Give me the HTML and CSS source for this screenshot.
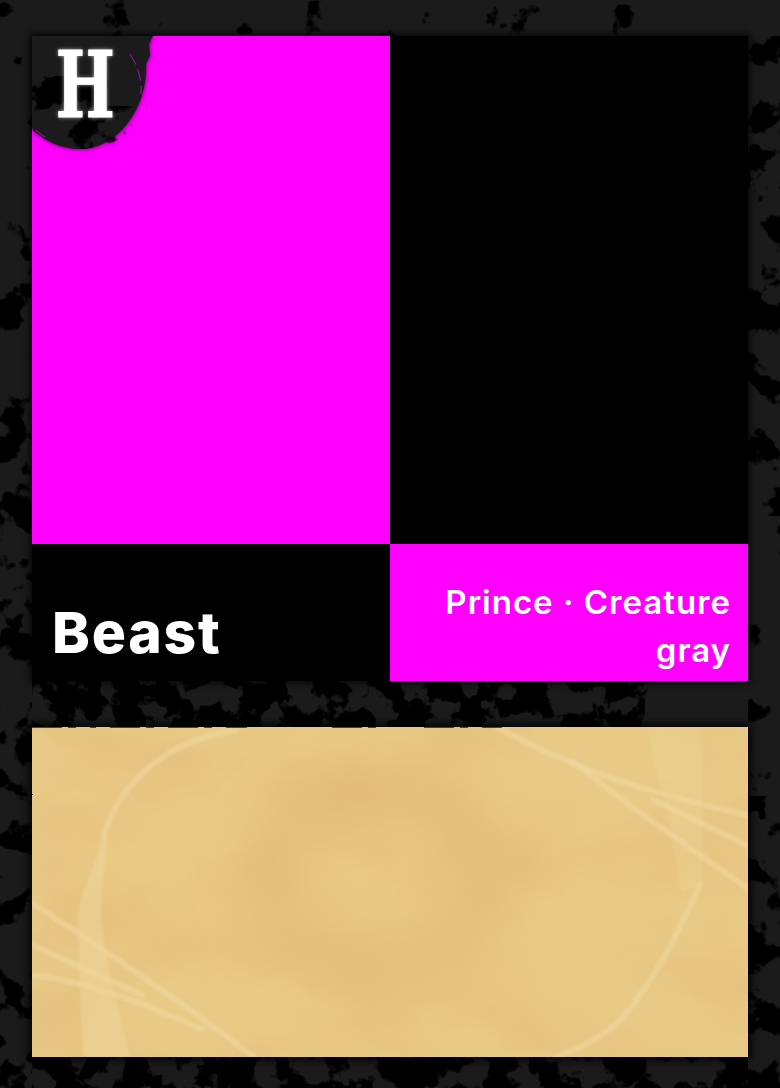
FILE: index.html
```html
<!DOCTYPE html>
<html lang="en">
<head>
    <meta charset="UTF-8">
    <meta name="viewport" content="width=device-width, initial-scale=1.0">
    <title>Beast</title>
    <link rel="stylesheet" href="styles.css">
</head>
<body>
    <div class="sheet">
        <!-- grunge behind the panels -->
        <svg class="grunge" width="780" height="1088" viewBox="0 0 780 1088" xmlns="http://www.w3.org/2000/svg">
            <defs>
                <filter id="ink-sparse" x="0" y="0" width="100%" height="100%" color-interpolation-filters="sRGB">
                    <feTurbulence type="fractalNoise" baseFrequency="0.03" numOctaves="4" seed="4"/>
                    <feColorMatrix values="0 0 0 0 0  0 0 0 0 0  0 0 0 0 0  14 0 0 0 -9.2"/>
                    <feComposite operator="in" in2="SourceAlpha"/>
                </filter>
                <filter id="ink-mid" x="0" y="0" width="100%" height="100%" color-interpolation-filters="sRGB">
                    <feTurbulence type="fractalNoise" baseFrequency="0.03" numOctaves="4" seed="11"/>
                    <feColorMatrix values="0 0 0 0 0  0 0 0 0 0  0 0 0 0 0  14 0 0 0 -7.2"/>
                    <feComposite operator="in" in2="SourceAlpha"/>
                </filter>
                <filter id="ink-dense" x="0" y="0" width="100%" height="100%" color-interpolation-filters="sRGB">
                    <feTurbulence type="fractalNoise" baseFrequency="0.035" numOctaves="4" seed="23"/>
                    <feColorMatrix values="0 0 0 0 0  0 0 0 0 0  0 0 0 0 0  14 0 0 0 -6"/>
                    <feComposite operator="in" in2="SourceAlpha"/>
                </filter>
                <filter id="rough" x="-2%" y="-2%" width="104%" height="104%">
                    <feTurbulence type="fractalNoise" baseFrequency="0.2" numOctaves="2" seed="7"/>
                    <feDisplacementMap in="SourceGraphic" scale="1.5" xChannelSelector="R" yChannelSelector="G"/>
                </filter>
                <filter id="stain-blur" x="-40%" y="-40%" width="180%" height="180%">
                    <feGaussianBlur stdDeviation="24"/>
                </filter>
                <filter id="paper-mottle" x="0" y="0" width="100%" height="100%" color-interpolation-filters="sRGB">
                    <feTurbulence type="fractalNoise" baseFrequency="0.008 0.012" numOctaves="4" seed="15"/>
                    <feColorMatrix values="0 0 0 0 0.87  0 0 0 0 0.69  0 0 0 0 0.44  1.4 0 0 0 -0.5"/>
                </filter>
                <filter id="mark-blur">
                    <feGaussianBlur stdDeviation="0.8"/>
                </filter>
            </defs>
            <rect x="0" y="0" width="780" height="36" filter="url(#ink-sparse)"/>
            <rect x="0" y="36" width="32" height="230" filter="url(#ink-sparse)"/>
            <rect x="0" y="266" width="32" height="822" filter="url(#ink-mid)"/>
            <rect x="748" y="36" width="32" height="480" filter="url(#ink-mid)"/>
            <rect x="748" y="516" width="32" height="280" filter="url(#ink-sparse)"/>
            <rect x="748" y="796" width="32" height="292" filter="url(#ink-mid)"/>
            <path d="M32 681H656C636 692 652 712 640 727H32Z" filter="url(#ink-dense)"/>
            <rect x="32" y="1057" width="716" height="31" filter="url(#ink-dense)"/>
        </svg>

        <section class="card">
            <div class="cell cell-art"></div>
            <div class="cell cell-dark"></div>
            <div class="cell cell-name">
                <h1 class="card-name">Beast</h1>
            </div>
            <div class="cell cell-type">
                <p class="card-type">Prince · Creature<br>gray</p>
            </div>

            <!-- clan badge bitten out of the top left corner -->
            <svg class="badge-bite" width="130" height="122" viewBox="0 0 130 122" xmlns="http://www.w3.org/2000/svg">
                <path class="bite-fill" d="M0 0H121L117 8L118 20L114 28C116 72 86 113 48 113C30 113 12 105 1 94L0 92Z"/>
                <path d="M0 40H80V70H116C108 92 82 113 48 113C30 113 12 105 1 94L0 92Z" filter="url(#ink-mid)"/>
                <path class="bite-scratch" d="M98 18C106 30 110 44 109 58M4 94C8 98 11 100 15 102"/>
            </svg>
            <span class="badge-letter">H</span>
        </section>

        <section class="paper">
            <svg class="paper-marks" width="716" height="330" viewBox="0 0 716 330" xmlns="http://www.w3.org/2000/svg">
                <rect width="716" height="330" filter="url(#paper-mottle)" opacity="0.45"/>
                <ellipse class="paper-stain" cx="345" cy="150" rx="110" ry="85" filter="url(#stain-blur)"/>
                <g filter="url(#mark-blur)">
                    <g class="marks-thin">
                        <path d="M205 3C140 12 90 50 72 108"/>
                        <path d="M668 158C650 195 632 240 591 290C570 312 545 322 525 330"/>
                        <path d="M465 0C520 30 580 58 716 88"/>
                        <path d="M540 34C610 90 670 128 716 162"/>
                        <path d="M621 73L716 119"/>
                        <path d="M0 176C60 215 150 275 222 330"/>
                        <path d="M0 218L110 268"/>
                        <path d="M0 248C60 255 120 280 170 302"/>
                    </g>
                    <path class="marks-wide" d="M70 108L76 110C76 135 66 160 70 200C78 260 92 300 98 330L52 330C48 280 46 220 46 190C46 165 64 145 70 108Z"/>
                    <path class="marks-band" d="M615 0H668C672 60 672 120 670 158L650 165C640 130 640 90 625 50Z"/>
                </g>
                <path class="paper-tear" d="M0 0.5H64M78 0.5H215M300 0.5H345M392 0.5H470"/>
            </svg>
        </section>
    </div>
</body>
</html>
```

FILE: styles.css
```css
* {
    margin: 0;
    padding: 0;
    box-sizing: border-box;
}

body {
    width: 780px;
    height: 1088px;
    overflow: hidden;
    background: #1b1b1b;
    font-family: Inter, "Liberation Sans", sans-serif;
}

.sheet {
    position: relative;
    width: 780px;
    height: 1088px;
    padding: 36px 32px 0;
}

.grunge {
    position: absolute;
    top: 0;
    left: 0;
}

.card {
    position: relative;
    display: grid;
    grid-template-columns: 358px 358px;
    grid-template-rows: 508px 137px;
    box-shadow: 0 0 7px 2px rgba(0, 0, 0, 0.8);
}

.cell {
    display: flex;
    align-items: flex-end;
}

.cell-art,
.cell-type {
    background: #f0f;
}

.cell-dark,
.cell-name {
    background: #000;
}

.cell-name {
    padding: 0 0 14px 20px;
}

.cell-type {
    justify-content: flex-end;
    padding: 0 17px 7px 0;
}

.card-name {
    font-size: 57px;
    font-weight: 800;
    line-height: 68px;
    letter-spacing: 1.8px;
    color: #fff;
}

.card-type {
    font-size: 33px;
    font-weight: 600;
    line-height: 48px;
    letter-spacing: 1px;
    text-align: right;
    color: #fff;
}

.badge-bite {
    position: absolute;
    top: 0;
    left: 0;
    filter: drop-shadow(0 0 2px rgba(0, 0, 0, 0.7));
}

.bite-fill {
    fill: #1b1b1b;
}

.bite-scratch {
    fill: none;
    stroke: #f0f;
    stroke-width: 0.7;
    stroke-dasharray: 12 5;
}

.badge-letter {
    position: absolute;
    top: 6px;
    left: 25px;
    width: 55px;
    font-family: "DejaVu Serif", serif;
    font-size: 92px;
    font-weight: 700;
    line-height: 86px;
    text-align: center;
    color: #fff;
    -webkit-text-stroke: 1px #fff;
    text-shadow: 0 0 5px rgba(255, 255, 255, 0.8);
    transform: translateX(-10px) scaleX(0.68);
}

.paper {
    position: relative;
    height: 330px;
    margin-top: 46px;
    background: #e8ca86;
    box-shadow: 0 0 8px 3px rgba(0, 0, 0, 0.85);
    filter: url(#rough);
}

.paper-marks {
    display: block;
}

.paper-stain {
    fill: none;
    stroke: #dfb276;
    stroke-width: 55;
    opacity: 0.55;
}

.paper-tear {
    fill: none;
    stroke: #2a2118;
    stroke-width: 1;
    stroke-dasharray: 30 6 8 14;
    opacity: 0.8;
}

.marks-thin path {
    fill: none;
    stroke: #f0d79f;
    stroke-width: 6;
    stroke-linecap: round;
    opacity: 0.6;
}

.marks-wide {
    fill: #efd69b;
    opacity: 0.55;
}

.marks-band {
    fill: #efd69b;
    opacity: 0.3;
}
```
